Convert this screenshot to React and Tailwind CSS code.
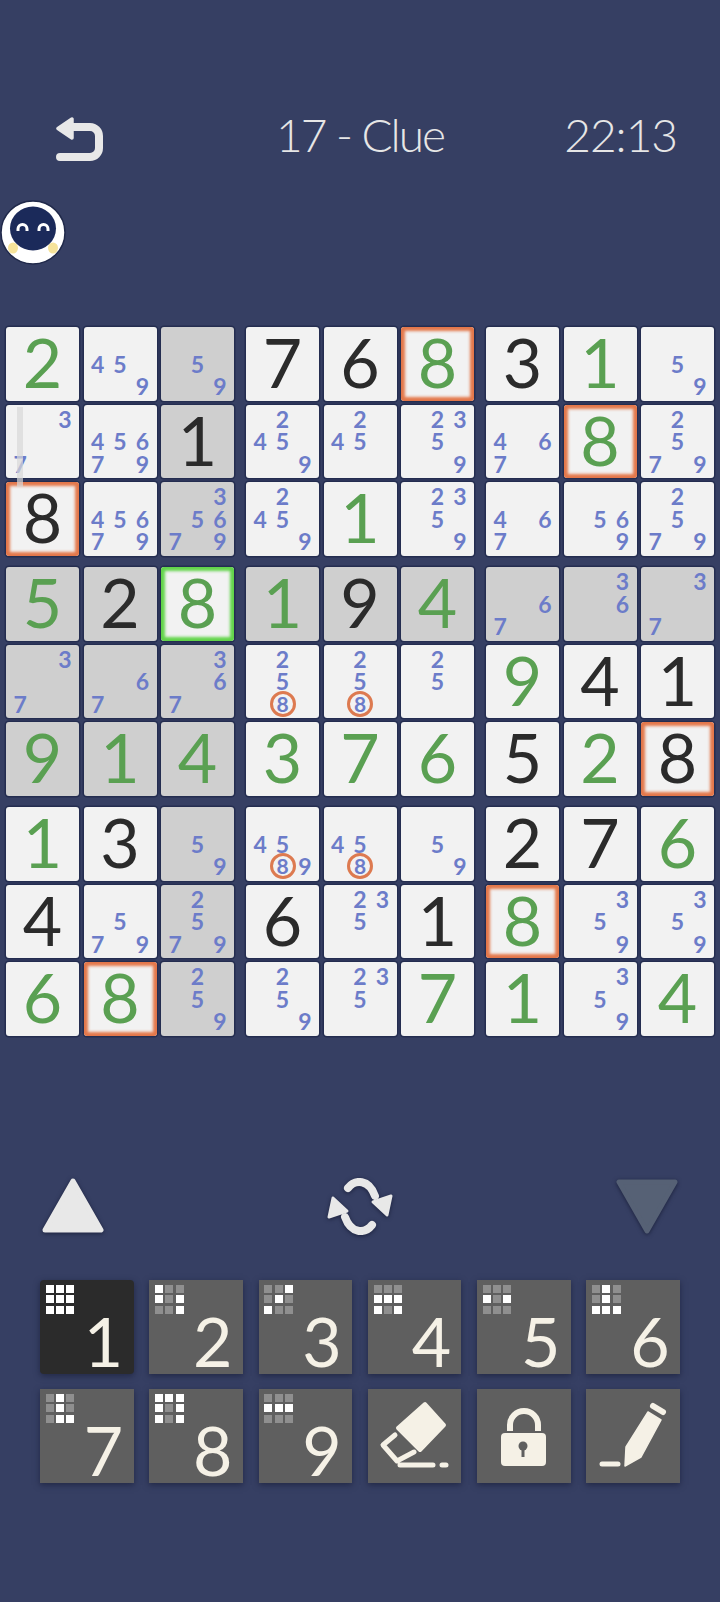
import React from 'react';

// value: g = given green, k = black. notes: pencil marks. s = shaded, o = orange frame, n = green frame, c = circled 8
const rows = [
  [{ g: 2 }, { n: [4, 5, 9] }, { n: [5, 9], s: 1 }, { k: 7 }, { k: 6 }, { g: 8, o: 1 }, { k: 3 }, { g: 1 }, { n: [5, 9] }],
  [{ n: [3, 7] }, { n: [4, 5, 6, 7, 9] }, { k: 1, s: 1 }, { n: [2, 4, 5, 9] }, { n: [2, 4, 5] }, { n: [2, 3, 5, 9] }, { n: [4, 6, 7] }, { g: 8, o: 1 }, { n: [2, 5, 7, 9] }],
  [{ k: 8, o: 1 }, { n: [4, 5, 6, 7, 9] }, { n: [3, 5, 6, 7, 9], s: 1 }, { n: [2, 4, 5, 9] }, { g: 1 }, { n: [2, 3, 5, 9] }, { n: [4, 6, 7] }, { n: [5, 6, 9] }, { n: [2, 5, 7, 9] }],
  [{ g: 5, s: 1 }, { k: 2, s: 1 }, { g: 8, sel: 1 }, { g: 1, s: 1 }, { k: 9, s: 1 }, { g: 4, s: 1 }, { n: [6, 7], s: 1 }, { n: [3, 6], s: 1 }, { n: [3, 7], s: 1 }],
  [{ n: [3, 7], s: 1 }, { n: [6, 7], s: 1 }, { n: [3, 6, 7], s: 1 }, { n: [2, 5, 8], c: 1 }, { n: [2, 5, 8], c: 1 }, { n: [2, 5] }, { g: 9 }, { k: 4 }, { k: 1 }],
  [{ g: 9, s: 1 }, { g: 1, s: 1 }, { g: 4, s: 1 }, { g: 3 }, { g: 7 }, { g: 6 }, { k: 5 }, { g: 2 }, { k: 8, o: 1 }],
  [{ g: 1 }, { k: 3 }, { n: [5, 9], s: 1 }, { n: [4, 5, 8, 9], c: 1 }, { n: [4, 5, 8], c: 1 }, { n: [5, 9] }, { k: 2 }, { k: 7 }, { g: 6 }],
  [{ k: 4 }, { n: [5, 7, 9] }, { n: [2, 5, 7, 9], s: 1 }, { k: 6 }, { n: [2, 3, 5] }, { k: 1 }, { g: 8, o: 1 }, { n: [3, 5, 9] }, { n: [3, 5, 9] }],
  [{ g: 6 }, { g: 8, o: 1 }, { n: [2, 5, 9], s: 1 }, { n: [2, 5, 9] }, { n: [2, 3, 5] }, { g: 7 }, { g: 1 }, { n: [3, 5, 9] }, { g: 4 }],
];

// which squares of the small grid are lit on each number key
const minis = {
  1: '111111111',
  2: '100101001',
  3: '001010100',
  4: '000111101',
  5: '000101000',
  6: '010010111',
  7: '010010011',
  8: '111101101',
  9: '000111000',
};

const Cell = ({ cell }) => {
  let tone = 'bg-[#f2f2f2] shadow-[0_0_0_1.5px_#242d50]';
  if (cell.s) tone = 'bg-[#cfcfcf] shadow-[0_0_0_1.5px_#242d50]';
  if (cell.o) tone = 'bg-[#f2f2f2] shadow-[inset_0_0_3px_4px_#e3774a,0_0_0_1.5px_#242d50]';
  if (cell.sel) tone = 'bg-[#f2f2f2] shadow-[inset_0_0_3px_4px_#62d44a,0_0_0_1.5px_#242d50]';

  if (cell.n) {
    return (
      <div className={`w-[73px] h-[73.5px] rounded-[3px] grid grid-cols-3 grid-rows-3 p-[3px] ${tone}`}>
        {[1, 2, 3, 4, 5, 6, 7, 8, 9].map((d) => (
          <div key={d} className="flex items-center justify-center min-w-0 min-h-0">
            {cell.n.includes(d) && (
              d === 8 && cell.c ? (
                <div className="shrink-0 w-[26px] h-[26px] rounded-full border-[3px] border-[#dd7a50] flex items-center justify-center">
                  <span className="block text-[21px] leading-[18px] font-bold text-[#6c7cc9]">8</span>
                </div>
              ) : (
                <span className="block text-[23px] leading-[22px] font-bold text-[#6c7cc9]">{d}</span>
              )
            )}
          </div>
        ))}
      </div>
    );
  }

  return (
    <div className={`w-[73px] h-[73.5px] rounded-[3px] flex items-center justify-center pb-[3px] text-[68px] leading-none ${tone} ${cell.g ? 'text-[#5aa052]' : 'text-[#2b2b2b]'}`}>
      {cell.g || cell.k}
    </div>
  );
};

const NumKey = ({ num, active }) => (
  <div className={`relative w-[93.5px] h-[93.5px] flex items-end justify-end pr-[10px] shadow-[0_2px_6px_rgba(20,25,50,0.6)] ${active ? 'bg-[#2b2b2b] rounded-[4px]' : 'bg-[#5f5f5f]'}`}>
    <div className="absolute left-[5.7px] top-[5px] grid grid-cols-3 gap-[2.3px] w-[28.6px]">
      {minis[num].split('').map((on, i) => (
        <div key={i} className={`w-[8px] h-[8px] ${on === '1' ? 'bg-white' : 'bg-[#8f8f8f]'}`} />
      ))}
    </div>
    <span className="w-[40px] text-center text-[68px] leading-[68px] mb-[-1px] text-[#f5f1e6]">{num}</span>
  </div>
);

const IconKey = ({ children }) => (
  <div className="w-[93.5px] h-[93.5px] bg-[#5f5f5f] shadow-[0_2px_6px_rgba(20,25,50,0.6)]">
    <svg width="93.5" height="93.5" viewBox="0 0 93.5 93.5">{children}</svg>
  </div>
);

const Refresh = () => (
  <svg width="66" height="57" viewBox="0 0 66 57" className="drop-shadow-[0_1px_2px_rgba(20,25,50,0.8)]">
    {[0, 180].map((r) => (
      <g key={r} transform={`rotate(${r} 33 28.5)`}>
        <path d="M21 10 C28 1 42 1 48 18" fill="none" stroke="#e8e8e8" strokeWidth="8" strokeLinecap="round" />
        <path d="M46 24 L64 18 L60 37 Z" fill="#e8e8e8" stroke="#e8e8e8" strokeWidth="3" strokeLinejoin="round" />
      </g>
    ))}
  </svg>
);

const App = () => {
  return (
    <div className="relative w-[720px] h-[1602px] overflow-hidden bg-[#363f63] font-[family-name:Lato,sans-serif]">
      {/* Header */}
      <div className="pt-[117px] h-[165px] grid grid-cols-[1fr_auto_1fr]">
        <svg width="47" height="44" viewBox="0 0 47 44" className="ml-[56px]">
          <path d="M2 11.5 L16 2 V21 Z" fill="#e8e8e8" stroke="#e8e8e8" strokeWidth="3.5" strokeLinejoin="round" />
          <path d="M14 10 H34 a9 9 0 0 1 9 9 V31 a9 9 0 0 1 -9 9 H4" fill="none" stroke="#e8e8e8" strokeWidth="8" strokeLinecap="round" />
        </svg>
        <div className="text-[46px] leading-[36px] font-light tracking-[-2px] text-[#e6e6e6] whitespace-nowrap">17 - Clue</div>
        <div className="text-[46px] leading-[36px] font-light tracking-[-1px] text-[#e6e6e6] text-right pr-[43px] whitespace-nowrap">22:13</div>
      </div>

      {/* Mascot */}
      <svg width="66" height="65" viewBox="0 0 66 65" className="mt-[35px] block">
        <ellipse cx="33" cy="32.5" rx="32" ry="31.5" fill="#fff" stroke="#20294a" strokeWidth="1.5" />
        <ellipse cx="13" cy="48" rx="5" ry="5.5" fill="#f6e39a" />
        <ellipse cx="53" cy="48" rx="5" ry="5.5" fill="#f6e39a" />
        <ellipse cx="33" cy="28.5" rx="23" ry="22" fill="#1b2a5a" />
        <path d="M18 31 v-2 a4.5 4.5 0 0 1 9 0 v2 M39 31 v-2 a4.5 4.5 0 0 1 9 0 v2" fill="none" stroke="#fff" strokeWidth="3" />
      </svg>

      {/* Board */}
      <div className="relative mt-[62px] pl-[6px] grid grid-cols-[repeat(3,228px)] gap-x-[12px] gap-y-[11.5px]">
        {[0, 1, 2].flatMap((br) =>
          [0, 1, 2].map((bc) => (
            <div key={`${br}-${bc}`} className="grid grid-cols-[repeat(3,73px)] gap-x-[4.5px] gap-y-[4px]">
              {[0, 1, 2].flatMap((r) =>
                [0, 1, 2].map((c) => <Cell key={`${r}-${c}`} cell={rows[br * 3 + r][bc * 3 + c]} />)
              )}
            </div>
          ))
        )}
        {/* scrollbar ghost */}
        <div className="absolute left-[17px] top-[80px] w-[6px] h-[80px] bg-[#d8d8d8]/70" />
      </div>

      {/* Triangles and swap */}
      <div className="mt-[142px] pl-[41px] pr-[41px] flex items-center justify-between">
        <svg width="64" height="57" viewBox="0 0 64 57" className="drop-shadow-[0_1px_2px_rgba(20,25,50,0.8)]">
          <path d="M32 3 L60 52 H4 Z" fill="#e8e8e8" stroke="#e8e8e8" strokeWidth="5" strokeLinejoin="round" />
        </svg>
        <Refresh />
        <svg width="64" height="57" viewBox="0 0 64 57" className="drop-shadow-[0_1px_2px_rgba(20,25,50,0.8)]">
          <path d="M4 4 H60 L32 53 Z" fill="#566175" stroke="#566175" strokeWidth="5" strokeLinejoin="round" />
        </svg>
      </div>

      {/* Keypad */}
      <div className="mt-[45.5px] ml-[40px] grid grid-cols-[repeat(6,93.5px)] gap-x-[15.8px] gap-y-[15.5px]">
        <NumKey num={1} active />
        <NumKey num={2} />
        <NumKey num={3} />
        <NumKey num={4} />
        <NumKey num={5} />
        <NumKey num={6} />
        <NumKey num={7} />
        <NumKey num={8} />
        <NumKey num={9} />
        <IconKey>
          <path d="M57 15 L76 36 L52 61 L30 39 Z" fill="#f5f1e6" stroke="#f5f1e6" strokeWidth="4" strokeLinejoin="round" />
          <path d="M27 46 L15 56 L29 72 L46 63 M32 76 H65" fill="none" stroke="#f5f1e6" strokeWidth="5" strokeLinecap="round" strokeLinejoin="round" />
          <path d="M74 76 H78" stroke="#f5f1e6" strokeWidth="5" strokeLinecap="round" />
        </IconKey>
        <IconKey>
          <path d="M33 42 V36 a14 14 0 0 1 28 0 V42" fill="none" stroke="#f5f1e6" strokeWidth="6" />
          <rect x="24" y="44" width="45" height="33" rx="4" fill="#f5f1e6" />
          <circle cx="46" cy="57" r="4.5" fill="#5f5f5f" />
          <rect x="44.5" y="58" width="3" height="10" fill="#5f5f5f" />
        </IconKey>
        <IconKey>
          <path d="M62 23 L75 31 L55 68 L39 77 L40 58 Z" fill="#f5f1e6" stroke="#f5f1e6" strokeWidth="1.5" strokeLinejoin="round" />
          <path d="M67 17 L77 23" stroke="#f5f1e6" strokeWidth="6" strokeLinecap="round" />
          <path d="M16 75 H32" stroke="#f5f1e6" strokeWidth="5" strokeLinecap="round" />
        </IconKey>
      </div>
    </div>
  );
};

export default App;
